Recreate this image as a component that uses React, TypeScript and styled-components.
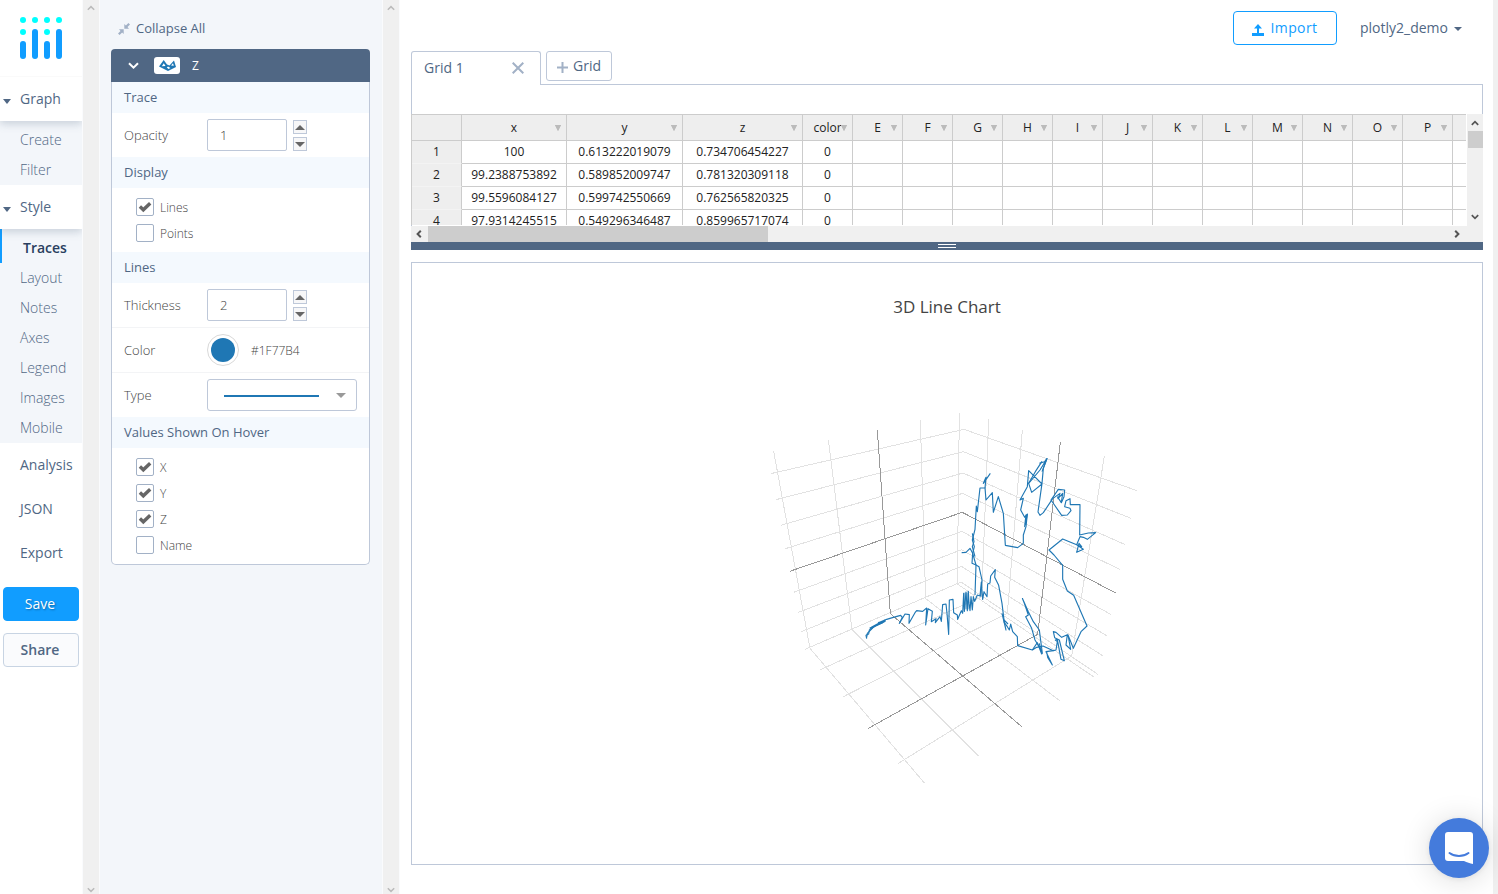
import React from "react";
import styled, { createGlobalStyle, css } from "styled-components";

const navy = "#506784";
const line = "#bec8d9";
const blue = "#119dff";
const traceBlue = "#1f77b4";

const GlobalStyle = createGlobalStyle`
  * { box-sizing: border-box; }
  body {
    margin: 0;
    background: #fff;
    font-family: "Open Sans", "Liberation Sans", sans-serif;
    font-size: 14px;
    color: ${navy};
    overflow: hidden;
  }
`;

const Page = styled.div`
  display: flex;
  height: 894px;
  width: 1498px;
`;

/* ---------- navigation ---------- */
const Nav = styled.nav`
  width: 82px;
  flex: none;
  display: flex;
  flex-direction: column;
`;
const LogoBox = styled.div`
  height: 77px;
  padding: 17px 0 0 20px;
  border-bottom: 1px solid #fafafa;
`;
const NavHeading = styled.div<{ $open?: boolean }>`
  position: relative;
  height: 44px;
  padding-left: 20px;
  line-height: 44px;
  white-space: nowrap;
  ${(p) => p.$open && css`
    z-index: 1;
    background: #fff;
    box-shadow: 0 3px 8px rgba(80, 103, 132, 0.26);
    clip-path: inset(0 0 -12px 0);
    &::before {
      content: "";
      position: absolute;
      left: 3px;
      top: 22px;
      border: 4.5px solid transparent;
      border-top-width: 5px;
      border-bottom: 0;
      border-top-color: ${navy};
    }
  `}
`;
const SubMenu = styled.div<{ $padTop: number }>`
  background: #f3f6fa;
  padding: ${(p) => p.$padTop}px 0 0;
`;
const SubItem = styled.div<{ $active?: boolean }>`
  height: 30px;
  line-height: 30px;
  padding-left: 20px;
  font-weight: 300;
  color: #506784;
  ${(p) => p.$active && css`
    height: 34px;
    line-height: 37px;
    border-left: 2px solid ${blue};
    padding-left: 21px;
    font-weight: 600;
    color: #2a3f5f;
  `}
`;
const NavButton = styled.button<{ $primary?: boolean }>`
  width: 76px;
  height: 34px;
  margin: 0 0 12px 3px;
  padding: 0 2px 1px 0;
  border-radius: 4px;
  font: ${(p) => (p.$primary ? 400 : 600)} 14px "Open Sans", sans-serif;
  border: 1px solid ${(p) => (p.$primary ? blue : "#c8d4e3")};
  background: ${(p) => (p.$primary ? blue : "#fafbfd")};
  color: ${(p) => (p.$primary ? "#fff" : navy)};
  text-shadow: ${(p) => (p.$primary ? "1px 1px 2px rgba(0,0,0,.35)" : "none")};
`;
const NavActions = styled.div`
  padding-top: 12px;
`;

/* ---------- scroll tracks ---------- */
const Track = styled.div`
  flex: none;
  width: 18px;
  border: solid #fafbfd;
  border-width: 0 1px;
  background: #f0f0f0;
  display: flex;
  flex-direction: column;
  justify-content: space-between;
  align-items: center;
  padding: 4px 0 0;
`;

/* ---------- style panel ---------- */
const Panel = styled.aside`
  flex: none;
  width: 282px;
  background: #f3f6fa;
  padding: 0 12px 0 11px;
`;
const CollapseAll = styled.div`
  height: 49px;
  padding: 8px 0 1px 7px;
  display: flex;
  align-items: center;
  gap: 6px;
  font-size: 13px;
  svg { margin-top: 2px; }
`;
const TraceCard = styled.section`
  display: flex;
  flex-direction: column;
  height: 516px;
`;
const TraceHeader = styled.header`
  flex: none;
  height: 33px;
  border-radius: 4px 4px 0 0;
  background: ${navy};
  color: #fff;
  display: flex;
  align-items: center;
  padding-left: 17px;
  font-size: 12px;
`;
const TraceBody = styled.div`
  flex: 1;
  border: 1px solid ${line};
  border-top: 0;
  border-radius: 0 0 5px 5px;
  background: #fff;
`;
const TraceBadge = styled.span`
  width: 26px;
  height: 17px;
  margin: 0 12px 0 15px;
  border-radius: 3px;
  background: #fff;
  display: flex;
  align-items: center;
  justify-content: center;
`;
const SectionTitle = styled.h3`
  margin: 0;
  height: 31px;
  line-height: 31px;
  padding-left: 12px;
  background: #f4f9fe;
  font-size: 13px;
  font-weight: 400;
`;
const Field = styled.div<{ $divided?: boolean }>`
  height: ${(p) => (p.$divided ? 45 : 44)}px;
  border-bottom: ${(p) => (p.$divided ? "1px solid #f3f4f6" : "0")};
  display: flex;
  align-items: center;
  padding-left: 12px;
  font-size: 13px;
  font-weight: 300;
  color: #444;
`;
const FieldLabel = styled.label`
  width: 83px;
  padding-bottom: 1px;
`;
const NumberBox = styled.div`
  width: 80px;
  height: 32px;
  border: 1px solid ${line};
  border-radius: 2px;
  line-height: 31px;
  padding-left: 12px;
`;
const Stepper = styled.div`
  display: flex;
  flex-direction: column;
  gap: 3px;
  margin: 1px 0 0 6px;
`;
const StepButton = styled.span<{ $down?: boolean }>`
  width: 14px;
  height: 14px;
  border: 1px solid ${line};
  background: #f7f7f8;
  display: flex;
  align-items: center;
  justify-content: center;
  &::after {
    content: "";
    border: 5px solid transparent;
    ${(p) => p.$down
      ? "border-top-color:#666;border-bottom:0;"
      : "border-bottom-color:#666;border-top:0;"}
  }
`;
const Swatch = styled.span`
  width: 32px;
  height: 32px;
  border: 1px solid #d9d9d9;
  border-radius: 50%;
  padding: 3px;
  margin-right: 12px;
  &::after {
    content: "";
    display: block;
    height: 24px;
    border-radius: 50%;
    background: ${traceBlue};
  }
`;
const HexValue = styled.span`
  font-size: 12px;
`;
const LineSelect = styled.div`
  width: 150px;
  height: 32px;
  border: 1px solid ${line};
  border-radius: 3px;
  display: flex;
  align-items: center;
  justify-content: space-between;
  padding: 0 10px 0 16px;
  &::before {
    content: "";
    width: 95px;
    height: 2px;
    margin-top: 1px;
    background: ${traceBlue};
  }
  &::after {
    content: "";
    border: 5px solid transparent;
    border-top-color: #999;
    border-bottom: 0;
  }
`;
const Checks = styled.div`
  display: flex;
  flex-direction: column;
  gap: 8px;
  padding: 10px 0 10px 24px;
`;
const CheckRow = styled.div`
  display: flex;
  align-items: center;
  gap: 6px;
  height: 18px;
  font-size: 12px;
  font-weight: 300;
  color: #444;
`;
const CheckLabel = styled.span`
  padding-top: 1px;
`;
const CheckBox = styled.span`
  width: 18px;
  height: 18px;
  border: 1px solid #a2b1c6;
  border-radius: 2px;
  display: flex;
  align-items: center;
  justify-content: center;
`;

/* ---------- workspace ---------- */
const Work = styled.main`
  flex: none;
  width: 1093px;
  padding: 0 10px 0 11px;
  display: flex;
  flex-direction: column;
`;
const TopBar = styled.div`
  height: 51px;
  padding: 11px 21px 6px 0;
  display: flex;
  justify-content: flex-end;
  align-items: center;
`;
const ImportButton = styled.button`
  width: 104px;
  height: 34px;
  border: 1px solid ${blue};
  border-radius: 4px;
  background: #fff;
  color: ${blue};
  font: 400 14px "Open Sans", sans-serif;
  letter-spacing: 0.4px;
  display: flex;
  align-items: center;
  justify-content: center;
  gap: 6px;
  padding: 0 0 1px;
  svg { margin-top: 4px; }
`;
const Account = styled.div`
  margin-left: 23px;
  display: flex;
  align-items: center;
  gap: 6px;
  padding-bottom: 2px;
  &::after {
    content: "";
    border: 4px solid transparent;
    border-top-color: ${navy};
    border-bottom: 0;
    margin-top: 3px;
  }
`;
const Tabs = styled.div`
  display: flex;
  height: 34px;
`;
const ActiveTab = styled.div`
  width: 130px;
  height: 34px;
  border: 1px solid ${line};
  border-bottom: 0;
  border-radius: 3px 3px 0 0;
  background: #fff;
  margin-bottom: -1px;
  position: relative;
  z-index: 1;
  display: flex;
  align-items: center;
  justify-content: space-between;
  padding: 0 16px 2px 12px;
`;
const AddTab = styled.div`
  width: 66px;
  height: 30px;
  margin-left: 5px;
  border: 1px solid ${line};
  border-radius: 3px;
  display: flex;
  align-items: center;
  gap: 5px;
  padding: 0 0 2px 10px;
  svg { margin-top: 5px; }
`;
const SheetBox = styled.div`
  width: 1072px;
  height: 158px;
  margin-top: -1px;
  border: 1px solid ${line};
  border-bottom: 0;
  padding-top: 29px;
`;
const SheetBody = styled.div`
  display: flex;
  height: 112px;
  margin: 0 -1px;
`;
const Cells = styled.div`
  width: 1055px;
  height: 111px;
  overflow: hidden;
  border-top: 1px solid #ccc;
  border-left: 1px solid #ccc;
  color: #222;
  font-size: 12px;
`;
const CellRow = styled.div<{ $head?: boolean }>`
  display: grid;
  grid-template-columns: 50px 105px 116px 120px repeat(14, 50px);
  height: ${(p) => (p.$head ? 26 : 23)}px;
  line-height: ${(p) => (p.$head ? 25 : 21)}px;
  background: ${(p) => (p.$head ? "#eee" : "#fff")};
`;
const Cell = styled.div<{ $shade?: boolean }>`
  border-right: 1px solid #ccc;
  border-bottom: 1px solid #ccc;
  text-align: center;
  position: relative;
  white-space: nowrap;
  ${(p) => p.$shade && "background:#eee;border-bottom-color:#f3f3f3;"}
`;
const SortMark = styled.span`
  position: absolute;
  right: 5px;
  top: 10px;
  border: 3.5px solid transparent;
  border-left-width: 3px;
  border-right-width: 3px;
  border-top: 6px solid #bbb;
  border-bottom: 0;
  &::before {
    content: "";
    position: absolute;
    left: -3.5px;
    top: -6px;
    border: 3.5px solid transparent;
    border-top: 6px solid #bbb;
    border-bottom: 0;
  }
`;
const VScroll = styled.div`
  width: 17px;
  height: 112px;
  border-left: 1px solid #fff;
  background: #f0f0f0;
  display: flex;
  flex-direction: column;
  align-items: center;
  justify-content: space-between;
  padding: 5px 0;
`;
const VThumb = styled.span`
  width: 15px;
  height: 17px;
  background: #cdcdcd;
  margin: 4px 0 auto;
`;
const HScroll = styled.div`
  height: 16px;
  margin: 0 -1px;
  background: #f0f0f0;
  display: flex;
  align-items: center;
  padding: 0 22px 0 4px;
`;
const HThumb = styled.span`
  width: 340px;
  height: 16px;
  background: #cdcdcd;
  margin: 0 auto 0 5px;
`;
const Splitter = styled.div`
  height: 8px;
  width: 1072px;
  background: ${navy};
  display: flex;
  flex-direction: column;
  align-items: center;
  justify-content: center;
  gap: 2px;
  &::before, &::after {
    content: "";
    width: 18px;
    height: 1px;
    background: #fff;
  }
`;
const ChartBox = styled.section`
  width: 1072px;
  height: 603px;
  margin-top: 12px;
  border: 1px solid ${line};
  display: flex;
  flex-direction: column;
  align-items: center;
`;
const ChartTitle = styled.h2`
  margin: 32px 0 0;
  font-size: 17px;
  line-height: 24px;
  font-weight: 400;
  color: #444;
`;
const Plot = styled.svg`
  margin: 81px 0 0 26px;
  width: 400px;
  height: 400px;
`;
const EdgeTrack = styled.div`
  width: 6px;
  flex: none;
  background: #f0f0f0;
`;
const ChatLauncher = styled.button`
  position: fixed;
  right: 9px;
  bottom: 16px;
  width: 60px;
  height: 60px;
  padding: 0;
  border: 0;
  border-radius: 50%;
  background: #447bdc;
  box-shadow: 0 1px 6px rgba(0, 0, 0, 0.08), 0 2px 30px rgba(0, 0, 0, 0.14);
  display: flex;
  align-items: center;
  justify-content: center;
`;

/* ---------- drawings ---------- */
type Dir = "up" | "down" | "left" | "right";
const angles: Record<Dir, number> = { up: 0, right: 90, down: 180, left: 270 };
const Chevron = ({ dir, color = "#555", width = 1.7 }: { dir: Dir; color?: string; width?: number }) => (
  <svg width="8" height="8" viewBox="0 0 8 8">
    <path d="M.8 5.8 4 2.6 7.200 5.800" fill="none" stroke={color} strokeWidth={width} transform={`rotate(${angles[dir]} 4 4)`} />
  </svg>
);

const Logo = () => (
  <svg width="42" height="42" viewBox="0 0 42 42">
    {[3, 15, 27, 39].map((x, i) => (
      <g key={x}>
        <circle cx={x} cy="3" r="3" fill="#0ff" />
        {i % 2 === 0 && <circle cx={x} cy="15" r="3" fill="#0ff" />}
        <rect x={x - 3} y={i % 2 ? 12 : 24} width="6" height={i % 2 ? 30 : 18} rx="3" fill={blue} />
      </g>
    ))}
  </svg>
);

const Tick = () => (
  <svg width="14" height="12" viewBox="0 0 14 12">
    <path d="M1.9 5.600 5.300 8.800 12.200 2.200" fill="none" stroke="#666" strokeWidth="3.4" />
  </svg>
);

const wallLines = [
  "41,154 150,745 494,1150",
  "205,119 276,689 656,1068",
  "481,61 497,596 899,902",
  "598,39 592,552 1003,832",
  "686,58 665,590 181,809",
  "787,91 742,640 250,890",
  "1033,169 935,768 415,1090",
  "32,221 612,88 1131,272",
  "48,299 610,155 1113,355",
  "62,376 609,219 1096,434",
  "76,446 608,280 1081,509",
  "101,577 606,394 1052,643",
  "113,638 605,449 1040,707",
  "124,695 604,499 1028,767",
  "135,748 603,546 1015,824",
];
const zeroLines = ["352,91 391,641 785,980", "901,127 833,703 325,985", "89,514 607,337 1067,579"];

const traces = [
  "320,716 318,706 326,702 328,690 345,678 360,668 330,684 368,668 334,682 374,660 340,680 376,662 355,668 380,658 400,652 422,646 427,652 418,670 435,642 448,644 447,670 465,638 470,632 488,634 500,624 497,675 504,626 517,634 514,665 528,656 526,668 540,650 544,664 548,614 558,612 561,640 566,703 568,600 579,598 581,638 592,645 593,658 604,632 608,640 611,580 613,634 618,576 622,632 625,574 627,610 630,632 633,590 637,630 640,590 644,604 652,585 660,588 664,546 668,598 672,575 681,590 683,552 690,549 692,528 706,509 704,532 716,556 726,610 733,668 742,680 748,690 752,672 758,695 772,710 773,737 817,750 830,742 849,738 880,752 888,750 892,725 886,720 892,718 903,778 913,782 898,720 884,713 880,695 888,697 905,712 922,704 918,735 932,748 924,705 940,745 963,695 981,678 941,586 922,573 908,538 908,496 882,465 867,450 908,417 950,434 970,448 950,457 957,430 965,440 950,434 960,410 970,412 982,418 1007,398 985,399 959,405 960,314 931,314 930,296 918,302 914,320 930,325 933,332 922,345 905,346 873,300 895,268 914,270 912,290 904,308 892,290",
  "904,308 908,280 894,296 900,280 878,296 850,338 840,346 834,336 846,250 850,205 861,176 840,210 806,250 815,277 846,252 806,212 802,260 780,300 790,295 782,330 794,352 802,342 798,380 790,405 790,430 773,443 736,436 730,340 715,290 700,337 697,278 678,300 675,264 660,264 652,335 649,318 645,388 637,420 643,440 638,460 648,495 645,585",
  "691,220 670,250 678,232 675,264",
  "838,190 854,185 861,176 846,215",
  "605,458 618,457 630,445 638,460 636,490 648,495 657,500 666,540 662,590",
  "787,595 805,635 820,665 838,690 847,760 840,745 825,720 815,685 797,650 805,645 793,610 787,595",
  "838,730 845,762 832,728 817,750",
  "880,752 858,755 877,795 863,772 860,755",
  "726,640 738,690 732,660 744,672",
  "798,344 794,380 800,350 796,375 802,342",
  "637,400 642,425 637,440 645,470",
  "320,712 322,700 340,682 376,664",
  "806,250 826,215 846,184",
];

const Scatter = () => (
  <Plot viewBox="0 0 1200 1200" fill="none" strokeWidth="3">
    {wallLines.map((p) => <polyline key={p} points={p} stroke="#e2e2e2" shapeRendering="crispEdges" />)}
    {zeroLines.map((p) => <polyline key={p} points={p} stroke="#999" shapeRendering="crispEdges" />)}
    <rect x="611" y="578" width="16" height="50" fill={traceBlue} opacity=".4" />
    {traces.map((p) => <polyline key={p} points={p} stroke={traceBlue} strokeWidth="3.4" strokeLinejoin="round" />)}
  </Plot>
);

/* ---------- data ---------- */
const headers = ["", "x", "y", "z", "color", ..."EFGHIJKLMNOP".split(""), ""];
const rows = [
  ["100", "0.613222019079", "0.734706454227", "0"],
  ["99.2388753892", "0.589852009747", "0.781320309118", "0"],
  ["99.5596084127", "0.599742550669", "0.762565820325", "0"],
  ["97.9314245515", "0.549296346487", "0.859965717074", "0"],
];

const Check = ({ label, on }: { label: string; on?: boolean }) => (
  <CheckRow>
    <CheckBox>{on && <Tick />}</CheckBox>
    <CheckLabel>{label}</CheckLabel>
  </CheckRow>
);

const NumberField = ({ label, value, divided }: { label: string; value: string; divided?: boolean }) => (
  <Field $divided={divided}>
    <FieldLabel>{label}</FieldLabel>
    <NumberBox>{value}</NumberBox>
    <Stepper>
      <StepButton />
      <StepButton $down />
    </Stepper>
  </Field>
);

const ScrollTrack = () => (
  <Track>
    <Chevron dir="up" color="#bbb" width={1.5} />
    <Chevron dir="down" color="#bbb" width={1.5} />
  </Track>
);

export default function App() {
  return (
    <Page>
      <GlobalStyle />
      <Nav>
        <LogoBox><Logo /></LogoBox>
        <NavHeading $open>Graph</NavHeading>
        <SubMenu $padTop={4}>
          <SubItem>Create</SubItem>
          <SubItem>Filter</SubItem>
        </SubMenu>
        <NavHeading $open>Style</NavHeading>
        <SubMenu $padTop={0}>
          <SubItem $active>Traces</SubItem>
          {["Layout", "Notes", "Axes", "Legend", "Images", "Mobile"].map((t) => <SubItem key={t}>{t}</SubItem>)}
        </SubMenu>
        {["Analysis", "JSON", "Export"].map((t) => <NavHeading key={t}>{t}</NavHeading>)}
        <NavActions>
          <NavButton $primary>Save</NavButton>
          <NavButton>Share</NavButton>
        </NavActions>
      </Nav>
      <ScrollTrack />
      <Panel>
        <CollapseAll>
          <svg width="12" height="12" viewBox="0 0 12 12">
            <path d="M6.300 5.700V1l1.600 1.500L10.400 0 12 1.600 9.500 4.100 11 5.700zM5.700 6.300V11L4.100 9.500 1.600 12 0 10.400 2.500 7.900 1 6.300z" fill="#a2b1c6" />
          </svg>
          <span>Collapse All</span>
        </CollapseAll>
        <TraceCard>
          <TraceHeader>
            <svg width="11" height="8" viewBox="0 0 11 8">
              <path d="M1 1.200 5.500 5.700 10 1.200" fill="none" stroke="#fff" strokeWidth="2" />
            </svg>
            <TraceBadge>
              <svg width="17" height="11" viewBox="0 0 17 11">
                <path d="M0 6.500 4.700 0 8 4.500 10.500 5.500 15 .6 17 7 9 11z" fill={traceBlue} />
                <path d="M2.800 6.200 4.800 3.200 6.500 5.900zM7.800 7.500 9 6.500 11.500 8 9.500 9zM12 5.500 14 3.300 14.800 5.800z" fill="#fff" />
              </svg>
            </TraceBadge>
            Z
          </TraceHeader>
          <TraceBody>
            <SectionTitle>Trace</SectionTitle>
            <NumberField label="Opacity" value="1" />
            <SectionTitle>Display</SectionTitle>
            <Checks>
              <Check label="Lines" on />
              <Check label="Points" />
            </Checks>
            <SectionTitle>Lines</SectionTitle>
            <NumberField label="Thickness" value="2" divided />
            <Field $divided>
              <FieldLabel>Color</FieldLabel>
              <Swatch />
              <HexValue>#1F77B4</HexValue>
            </Field>
            <Field>
              <FieldLabel>Type</FieldLabel>
              <LineSelect />
            </Field>
            <SectionTitle>Values Shown On Hover</SectionTitle>
            <Checks>
              <Check label="X" on />
              <Check label="Y" on />
              <Check label="Z" on />
              <Check label="Name" />
            </Checks>
          </TraceBody>
        </TraceCard>
      </Panel>
      <ScrollTrack />
      <Work>
        <TopBar>
          <ImportButton>
            <svg width="12" height="12" viewBox="0 0 12 12">
              <path d="M0 9h12v3H0zM6 0l4 4.400H7V9H5V4.400H2z" fill={blue} />
            </svg>
            Import
          </ImportButton>
          <Account>plotly2_demo</Account>
        </TopBar>
        <Tabs>
          <ActiveTab>
            Grid 1
            <svg width="12" height="12" viewBox="0 0 12 12">
              <path d="M.7.7l10.600 10.600M11.300.7.7 11.300" stroke="#a2b1c6" strokeWidth="2" />
            </svg>
          </ActiveTab>
          <AddTab>
            <svg width="11" height="11" viewBox="0 0 11 11">
              <path d="M5.500 0v11M0 5.500h11" stroke="#a2b1c6" strokeWidth="2" />
            </svg>
            Grid
          </AddTab>
        </Tabs>
        <SheetBox>
          <SheetBody>
            <Cells>
              <CellRow $head>
                {headers.map((h, i) => (
                  <Cell key={i}>{h}{h && <SortMark />}</Cell>
                ))}
              </CellRow>
              {rows.map((r, n) => (
                <CellRow key={n}>
                  <Cell $shade>{n + 1}</Cell>
                  {headers.slice(1).map((_, i) => <Cell key={i}>{r[i]}</Cell>)}
                </CellRow>
              ))}
            </Cells>
            <VScroll>
              <Chevron dir="up" />
              <VThumb />
              <Chevron dir="down" />
            </VScroll>
          </SheetBody>
          <HScroll>
            <Chevron dir="left" width={2} />
            <HThumb />
            <Chevron dir="right" width={2} />
          </HScroll>
        </SheetBox>
        <Splitter />
        <ChartBox>
          <ChartTitle>3D Line Chart</ChartTitle>
          <Scatter />
        </ChartBox>
      </Work>
      <EdgeTrack />
      <ChatLauncher aria-label="Open chat">
        <svg width="28" height="32" viewBox="0 0 28 32">
          <path d="M3 0h22a3 3 0 0 1 3 3v29c-3-.3-6-1.800-9-3H3a3 3 0 0 1-3-3V3a3 3 0 0 1 3-3z" fill="#fff" />
          <path d="M4.500 21c5.500 4 13.500 4 19 0" fill="none" stroke="#447bdc" strokeWidth="2" strokeLinecap="round" />
        </svg>
      </ChatLauncher>
    </Page>
  );
}
